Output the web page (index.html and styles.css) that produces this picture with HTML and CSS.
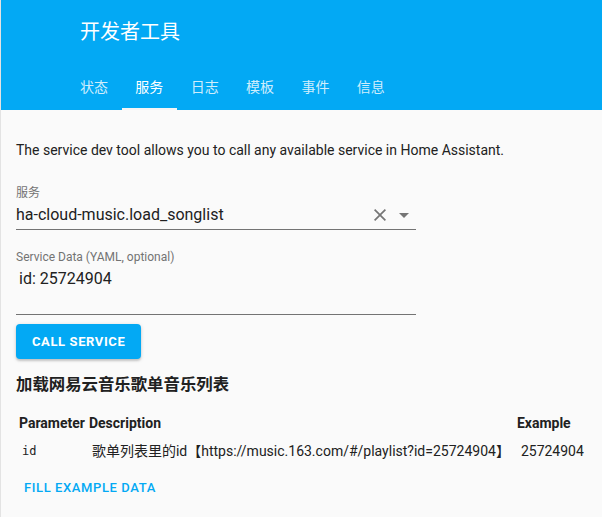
FILE: index.html
```html
<!DOCTYPE html>
<html lang="zh">
<head>
<meta charset="utf-8">
<title>开发者工具</title>
<link rel="stylesheet" href="styles.css">
</head>
<body>
<div class="page">
  <header class="header">
    <div class="toolbar"><span class="title">开发者工具</span></div>
    <nav class="tabs">
      <span class="tab">状态</span>
      <span class="tab active">服务</span>
      <span class="tab">日志</span>
      <span class="tab">模板</span>
      <span class="tab">事件</span>
      <span class="tab">信息</span>
    </nav>
  </header>
  <main class="content">
    <p class="intro">The service dev tool allows you to call any available service in Home Assistant.</p>
    <div class="field field-service">
      <div class="label">服务</div>
      <div class="value-row">
        <span class="value">ha-cloud-music.load_songlist</span>
        <span class="icon-box">
          <svg class="icon-clear" width="12" height="12" viewBox="5 5 14 14"><path d="M19 6.41L17.59 5 12 10.59 6.41 5 5 6.41 10.59 12 5 17.59 6.41 19 12 13.41 17.59 19 19 17.59 13.41 12z" fill="#757575"/></svg>
        </span>
        <span class="icon-box">
          <svg width="24" height="24" viewBox="0 0 24 24"><path d="M7 10l5 5 5-5z" fill="#757575"/></svg>
        </span>
      </div>
    </div>
    <div class="field field-data">
      <div class="label">Service Data (YAML, optional)</div>
      <div class="code-area">id: 25724904</div>
    </div>
    <button class="call-btn">CALL SERVICE</button>
    <h3 class="svc-title">加载网易云音乐歌单音乐列表</h3>
    <table class="attrs">
      <tr>
        <th>Parameter</th>
        <th>Description</th>
        <th>Example</th>
      </tr>
      <tr>
        <td><code>id</code></td>
        <td class="desc">歌单列表里的id【https://music.163.com/#/playlist?id=25724904】</td>
        <td class="example">25724904</td>
      </tr>
    </table>
    <button class="text-btn">FILL EXAMPLE DATA</button>
  </main>
</div>
</body>
</html>
```

FILE: styles.css
```css
html, body {
  margin: 0;
  padding: 0;
  background: #fafafa;
}

body {
  font-family: Roboto, "Noto Sans CJK SC", sans-serif;
  color: #212121;
}

.page {
  border-left: 1px solid #e3e3e3;
  min-height: 517px;
  box-sizing: border-box;
}

.header {
  background: #03a9f4;
  color: #fff;
  height: 110px;
}

.toolbar {
  height: 64px;
  display: flex;
  align-items: center;
  padding-left: 79px;
}

.title {
  font-size: 20px;
  line-height: 28px;
  font-weight: 400;
}

.tabs {
  display: flex;
  height: 46px;
  padding-left: 65.3px;
}

.tab {
  font-size: 14px;
  line-height: 20px;
  padding: 0 13.7px;
  display: flex;
  align-items: center;
  color: rgba(255, 255, 255, 0.82);
  box-sizing: border-box;
  border-bottom: 2px solid transparent;
  padding-top: 2px;
}

.tab.active {
  color: #fff;
  border-bottom-color: #f5f5f5;
}

.content {
  padding: 30px 8px 0 15px;
}

.intro {
  margin: 0;
  font-size: 14px;
  line-height: 20px;
}

.field {
  width: 400px;
}

.field-service {
  margin-top: 25px;
}

.field-data {
  margin-top: 19px;
}

.label {
  font-size: 12px;
  line-height: 16px;
  color: #737373;
}

.value-row {
  display: flex;
  align-items: center;
  margin-top: 2px;
  padding-bottom: 2px;
  border-bottom: 1px solid #737373;
}

.value {
  flex: 1;
  font-size: 16px;
  line-height: 24px;
}

.icon-box {
  width: 24px;
  height: 24px;
  display: flex;
  align-items: center;
  justify-content: center;
}

.icon-box svg {
  display: block;
}

.code-area {
  margin-top: 2px;
  height: 48px;
  box-sizing: border-box;
  padding-left: 3px;
  font-size: 16px;
  line-height: 24px;
  border-bottom: 1px solid #737373;
}

.call-btn {
  display: block;
  margin-top: 9px;
  height: 35px;
  padding: 0 16px;
  border: none;
  border-radius: 4px;
  background: #03a9f4;
  color: #fff;
  font-family: Roboto, sans-serif;
  font-size: 13px;
  font-weight: 700;
  letter-spacing: 0.6px;
  box-shadow: 0 2px 2px rgba(0, 0, 0, 0.14), 0 1px 4px rgba(0, 0, 0, 0.14);
}

.svc-title {
  margin: 14px 0 0 0;
  font-size: 16.4px;
  line-height: 24px;
  font-weight: 700;
}

.attrs {
  margin-top: 12px;
  border-spacing: 2px;
  font-size: 14px;
  white-space: nowrap;
}

.attrs th {
  text-align: left;
  font-weight: 700;
  padding: 1px;
  line-height: 23px;
}

.attrs td {
  padding: 1px 4px;
  line-height: 23px;
}

.attrs td.example {
  padding-left: 5px;
}

.attrs code {
  font-family: "DejaVu Sans Mono", monospace;
  font-size: 12px;
}

.text-btn {
  display: block;
  margin-top: 3px;
  height: 36px;
  padding: 0 8px;
  border: none;
  background: transparent;
  color: #03a9f4;
  font-family: Roboto, sans-serif;
  font-size: 13px;
  font-weight: 500;
  letter-spacing: 0.6px;
}
```
